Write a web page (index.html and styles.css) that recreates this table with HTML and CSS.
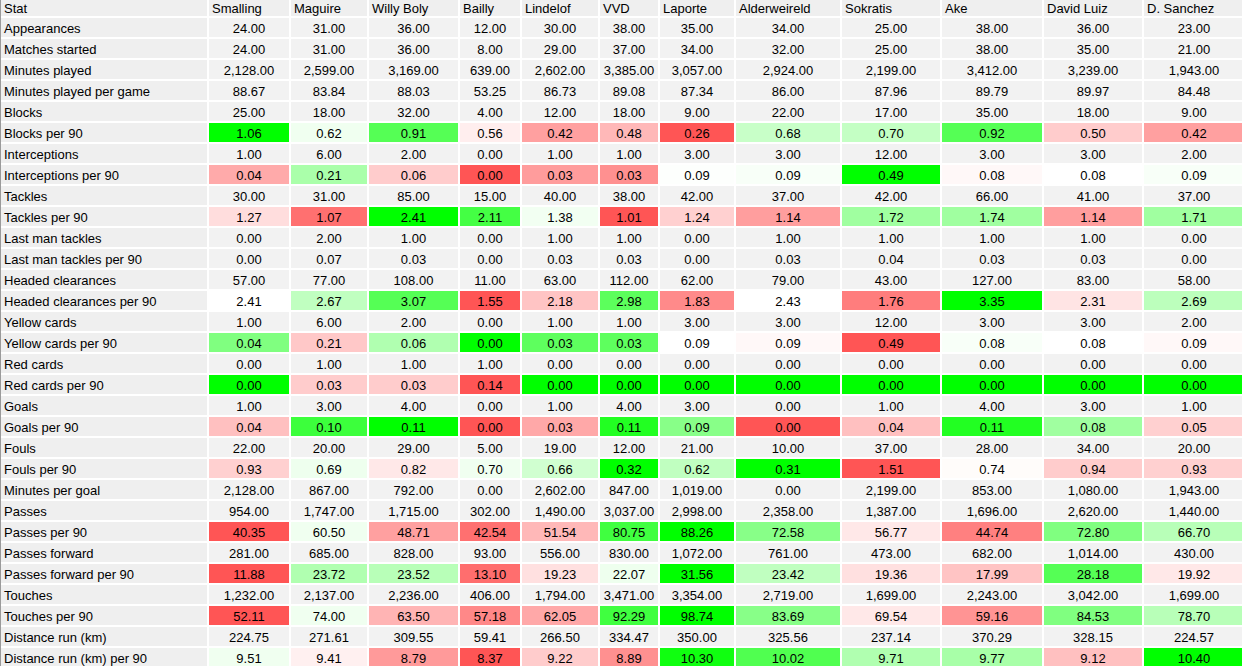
FILE: index.html
```html
<!DOCTYPE html>
<html>
<head>
<meta charset="utf-8">
<title>Defender stats</title>
<link rel="stylesheet" href="styles.css">
</head>
<body>
<div class="frame">
<table class="stats">
<thead>
<tr>
<th class="c-stat">Stat</th><th class="c1">Smalling</th><th class="c2">Maguire</th><th class="c3">Willy Boly</th><th class="c4">Bailly</th><th class="c5">Lindelof</th><th class="c6">VVD</th><th class="c7">Laporte</th><th class="c8">Alderweireld</th><th class="c9">Sokratis</th><th class="c10">Ake</th><th class="c11">David Luiz</th><th class="c12">D. Sanchez</th>
</tr>
</thead>
<tbody>
<tr><td class="lbl">Appearances</td><td>24.00</td><td>31.00</td><td>36.00</td><td>12.00</td><td>30.00</td><td>38.00</td><td>35.00</td><td>34.00</td><td>25.00</td><td>38.00</td><td>36.00</td><td>23.00</td></tr>
<tr><td class="lbl">Matches started</td><td>24.00</td><td>31.00</td><td>36.00</td><td>8.00</td><td>29.00</td><td>37.00</td><td>34.00</td><td>32.00</td><td>25.00</td><td>38.00</td><td>35.00</td><td>21.00</td></tr>
<tr><td class="lbl">Minutes played</td><td>2,128.00</td><td>2,599.00</td><td>3,169.00</td><td>639.00</td><td>2,602.00</td><td>3,385.00</td><td>3,057.00</td><td>2,924.00</td><td>2,199.00</td><td>3,412.00</td><td>3,239.00</td><td>1,943.00</td></tr>
<tr><td class="lbl">Minutes played per game</td><td>88.67</td><td>83.84</td><td>88.03</td><td>53.25</td><td>86.73</td><td>89.08</td><td>87.34</td><td>86.00</td><td>87.96</td><td>89.79</td><td>89.97</td><td>84.48</td></tr>
<tr><td class="lbl">Blocks</td><td>25.00</td><td>18.00</td><td>32.00</td><td>4.00</td><td>12.00</td><td>18.00</td><td>9.00</td><td>22.00</td><td>17.00</td><td>35.00</td><td>18.00</td><td>9.00</td></tr>
<tr><td class="lbl">Blocks per 90</td><td style="background:#00ff00">1.06</td><td style="background:#f0fff0">0.62</td><td style="background:#55ff55">0.91</td><td style="background:#ffeeee">0.56</td><td style="background:#ffa0a0">0.42</td><td style="background:#ffb8b8">0.48</td><td style="background:#ff5555">0.26</td><td style="background:#c8ffc8">0.68</td><td style="background:#c4ffc4">0.70</td><td style="background:#55ff55">0.92</td><td style="background:#ffcccc">0.50</td><td style="background:#ffa0a0">0.42</td></tr>
<tr><td class="lbl">Interceptions</td><td>1.00</td><td>6.00</td><td>2.00</td><td>0.00</td><td>1.00</td><td>1.00</td><td>3.00</td><td>3.00</td><td>12.00</td><td>3.00</td><td>3.00</td><td>2.00</td></tr>
<tr><td class="lbl">Interceptions per 90</td><td style="background:#ffaaaa">0.04</td><td style="background:#aaffaa">0.21</td><td style="background:#ffcccc">0.06</td><td style="background:#ff5555">0.00</td><td style="background:#ff9c9c">0.03</td><td style="background:#ff9090">0.03</td><td style="background:#fdfffd">0.09</td><td style="background:#f8fff8">0.09</td><td style="background:#00ff00">0.49</td><td style="background:#fff8f8">0.08</td><td style="background:#ffffff">0.08</td><td style="background:#f8fff8">0.09</td></tr>
<tr><td class="lbl">Tackles</td><td>30.00</td><td>31.00</td><td>85.00</td><td>15.00</td><td>40.00</td><td>38.00</td><td>42.00</td><td>37.00</td><td>42.00</td><td>66.00</td><td>41.00</td><td>37.00</td></tr>
<tr><td class="lbl">Tackles per 90</td><td style="background:#ffdddd">1.27</td><td style="background:#ff7070">1.07</td><td style="background:#00ff00">2.41</td><td style="background:#44ff44">2.11</td><td style="background:#f2fff2">1.38</td><td style="background:#ff5555">1.01</td><td style="background:#ffd0d0">1.24</td><td style="background:#ff9e9e">1.14</td><td style="background:#a0ffa0">1.72</td><td style="background:#a0ffa0">1.74</td><td style="background:#ff9e9e">1.14</td><td style="background:#a0ffa0">1.71</td></tr>
<tr><td class="lbl">Last man tackles</td><td>0.00</td><td>2.00</td><td>1.00</td><td>0.00</td><td>1.00</td><td>1.00</td><td>0.00</td><td>1.00</td><td>1.00</td><td>1.00</td><td>1.00</td><td>0.00</td></tr>
<tr><td class="lbl">Last man tackles per 90</td><td>0.00</td><td>0.07</td><td>0.03</td><td>0.00</td><td>0.03</td><td>0.03</td><td>0.00</td><td>0.03</td><td>0.04</td><td>0.03</td><td>0.03</td><td>0.00</td></tr>
<tr><td class="lbl">Headed clearances</td><td>57.00</td><td>77.00</td><td>108.00</td><td>11.00</td><td>63.00</td><td>112.00</td><td>62.00</td><td>79.00</td><td>43.00</td><td>127.00</td><td>83.00</td><td>58.00</td></tr>
<tr><td class="lbl">Headed clearances per 90</td><td style="background:#ffffff">2.41</td><td style="background:#c0ffc0">2.67</td><td style="background:#55ff55">3.07</td><td style="background:#ff5555">1.55</td><td style="background:#ffc4c4">2.18</td><td style="background:#5cff5c">2.98</td><td style="background:#ff8a8a">1.83</td><td style="background:#ffffff">2.43</td><td style="background:#ff7d7d">1.76</td><td style="background:#00ff00">3.35</td><td style="background:#ffe4e4">2.31</td><td style="background:#bcffbc">2.69</td></tr>
<tr><td class="lbl">Yellow cards</td><td>1.00</td><td>6.00</td><td>2.00</td><td>0.00</td><td>1.00</td><td>1.00</td><td>3.00</td><td>3.00</td><td>12.00</td><td>3.00</td><td>3.00</td><td>2.00</td></tr>
<tr><td class="lbl">Yellow cards per 90</td><td style="background:#80ff80">0.04</td><td style="background:#ffc8c8">0.21</td><td style="background:#b0ffb0">0.06</td><td style="background:#00ff00">0.00</td><td style="background:#5eff5e">0.03</td><td style="background:#5eff5e">0.03</td><td style="background:#ffffff">0.09</td><td style="background:#fff8f8">0.09</td><td style="background:#ff5555">0.49</td><td style="background:#f8fff8">0.08</td><td style="background:#ffffff">0.08</td><td style="background:#fff8f8">0.09</td></tr>
<tr><td class="lbl">Red cards</td><td>0.00</td><td>1.00</td><td>1.00</td><td>1.00</td><td>0.00</td><td>0.00</td><td>0.00</td><td>0.00</td><td>0.00</td><td>0.00</td><td>0.00</td><td>0.00</td></tr>
<tr><td class="lbl">Red cards per 90</td><td style="background:#00ff00">0.00</td><td style="background:#ffcccc">0.03</td><td style="background:#ffcccc">0.03</td><td style="background:#ff5555">0.14</td><td style="background:#00ff00">0.00</td><td style="background:#00ff00">0.00</td><td style="background:#00ff00">0.00</td><td style="background:#00ff00">0.00</td><td style="background:#00ff00">0.00</td><td style="background:#00ff00">0.00</td><td style="background:#00ff00">0.00</td><td style="background:#00ff00">0.00</td></tr>
<tr><td class="lbl">Goals</td><td>1.00</td><td>3.00</td><td>4.00</td><td>0.00</td><td>1.00</td><td>4.00</td><td>3.00</td><td>0.00</td><td>1.00</td><td>4.00</td><td>3.00</td><td>1.00</td></tr>
<tr><td class="lbl">Goals per 90</td><td style="background:#ffc0c0">0.04</td><td style="background:#3cff3c">0.10</td><td style="background:#00ff00">0.11</td><td style="background:#ff5555">0.00</td><td style="background:#ffa8a8">0.03</td><td style="background:#22ff22">0.11</td><td style="background:#88ff88">0.09</td><td style="background:#ff5555">0.00</td><td style="background:#ffc0c0">0.04</td><td style="background:#22ff22">0.11</td><td style="background:#a0ffa0">0.08</td><td style="background:#ffd0d0">0.05</td></tr>
<tr><td class="lbl">Fouls</td><td>22.00</td><td>20.00</td><td>29.00</td><td>5.00</td><td>19.00</td><td>12.00</td><td>21.00</td><td>10.00</td><td>37.00</td><td>28.00</td><td>34.00</td><td>20.00</td></tr>
<tr><td class="lbl">Fouls per 90</td><td style="background:#ffd0d0">0.93</td><td style="background:#eeffee">0.69</td><td style="background:#ffe8e8">0.82</td><td style="background:#f0fff0">0.70</td><td style="background:#d0ffd0">0.66</td><td style="background:#00ff00">0.32</td><td style="background:#c0ffc0">0.62</td><td style="background:#00ff00">0.31</td><td style="background:#ff5555">1.51</td><td style="background:#fffcfa">0.74</td><td style="background:#ffcccc">0.94</td><td style="background:#ffd0d0">0.93</td></tr>
<tr><td class="lbl">Minutes per goal</td><td>2,128.00</td><td>867.00</td><td>792.00</td><td>0.00</td><td>2,602.00</td><td>847.00</td><td>1,019.00</td><td>0.00</td><td>2,199.00</td><td>853.00</td><td>1,080.00</td><td>1,943.00</td></tr>
<tr><td class="lbl">Passes</td><td>954.00</td><td>1,747.00</td><td>1,715.00</td><td>302.00</td><td>1,490.00</td><td>3,037.00</td><td>2,998.00</td><td>2,358.00</td><td>1,387.00</td><td>1,696.00</td><td>2,620.00</td><td>1,440.00</td></tr>
<tr><td class="lbl">Passes per 90</td><td style="background:#ff5555">40.35</td><td style="background:#f0fff0">60.50</td><td style="background:#ffa0a0">48.71</td><td style="background:#ff7070">42.54</td><td style="background:#ffb8b8">51.54</td><td style="background:#40ff40">80.75</td><td style="background:#00ff00">88.26</td><td style="background:#88ff88">72.58</td><td style="background:#ffe8e8">56.77</td><td style="background:#ff8080">44.74</td><td style="background:#80ff80">72.80</td><td style="background:#b8ffb8">66.70</td></tr>
<tr><td class="lbl">Passes forward</td><td>281.00</td><td>685.00</td><td>828.00</td><td>93.00</td><td>556.00</td><td>830.00</td><td>1,072.00</td><td>761.00</td><td>473.00</td><td>682.00</td><td>1,014.00</td><td>430.00</td></tr>
<tr><td class="lbl">Passes forward per 90</td><td style="background:#ff5555">11.88</td><td style="background:#b0ffb0">23.72</td><td style="background:#b8ffb8">23.52</td><td style="background:#ff6e6e">13.10</td><td style="background:#ffe0e0">19.23</td><td style="background:#eeffee">22.07</td><td style="background:#00ff00">31.56</td><td style="background:#c0ffc0">23.42</td><td style="background:#ffe0e0">19.36</td><td style="background:#ffc4c4">17.99</td><td style="background:#55ff55">28.18</td><td style="background:#ffe8e8">19.92</td></tr>
<tr><td class="lbl">Touches</td><td>1,232.00</td><td>2,137.00</td><td>2,236.00</td><td>406.00</td><td>1,794.00</td><td>3,471.00</td><td>3,354.00</td><td>2,719.00</td><td>1,699.00</td><td>2,243.00</td><td>3,042.00</td><td>1,699.00</td></tr>
<tr><td class="lbl">Touches per 90</td><td style="background:#ff5555">52.11</td><td style="background:#f0fff0">74.00</td><td style="background:#ffb4b4">63.50</td><td style="background:#ff8888">57.18</td><td style="background:#ffa8a8">62.05</td><td style="background:#40ff40">92.29</td><td style="background:#00ff00">98.74</td><td style="background:#88ff88">83.69</td><td style="background:#ffe8e8">69.54</td><td style="background:#ff9494">59.16</td><td style="background:#80ff80">84.53</td><td style="background:#b8ffb8">78.70</td></tr>
<tr><td class="lbl">Distance run (km)</td><td>224.75</td><td>271.61</td><td>309.55</td><td>59.41</td><td>266.50</td><td>334.47</td><td>350.00</td><td>325.56</td><td>237.14</td><td>370.29</td><td>328.15</td><td>224.57</td></tr>
<tr><td class="lbl">Distance run (km) per 90</td><td style="background:#f0fff0">9.51</td><td style="background:#fff0f0">9.41</td><td style="background:#ff9a9a">8.79</td><td style="background:#ff5555">8.37</td><td style="background:#ffcccc">9.22</td><td style="background:#ff9090">8.89</td><td style="background:#10ff10">10.30</td><td style="background:#50ff50">10.02</td><td style="background:#b0ffb0">9.71</td><td style="background:#a8ffa8">9.77</td><td style="background:#ffc0c0">9.12</td><td style="background:#00ff00">10.40</td></tr>
</tbody>
</table>
</div>
</body>
</html>
```
FILE: styles.css
```css
html, body {
  margin: 0;
  padding: 0;
  background: #ffffff;
  overflow: hidden;
  width: 1242px;
  height: 666px;
}

.frame {
  border-left: 1px solid #9a9a9a;
  height: 666px;
  overflow: hidden;
}

.stats {
  table-layout: fixed;
  border-collapse: separate;
  border-spacing: 2px;
  margin: -2px 0 0 -2px;
  font-family: "Liberation Sans", Arial, sans-serif;
  font-size: 13px;
  color: #000000;
  width: 1247px;
}

.stats th,
.stats td {
  box-sizing: border-box;
  line-height: 15px;
  white-space: nowrap;
  overflow: hidden;
  font-weight: normal;
}

.stats th {
  background: #efefef;
  text-align: left;
  padding: 1px 3px 0;
  height: 16px;
}

.stats td {
  background: #f2f2f2;
  text-align: center;
  padding: 3px 3px 1px;
  height: 19px;
}

.stats td.lbl {
  background: #efefef;
  text-align: left;
}

.c-stat { width: 206px; }
.c1 { width: 80px; }
.c2 { width: 76px; }
.c3 { width: 89px; }
.c4 { width: 60px; }
.c5 { width: 76px; }
.c6 { width: 58px; }
.c7 { width: 74px; }
.c8 { width: 104px; }
.c9 { width: 98px; }
.c10 { width: 100px; }
.c11 { width: 98px; }
.c12 { width: 100px; }
```
